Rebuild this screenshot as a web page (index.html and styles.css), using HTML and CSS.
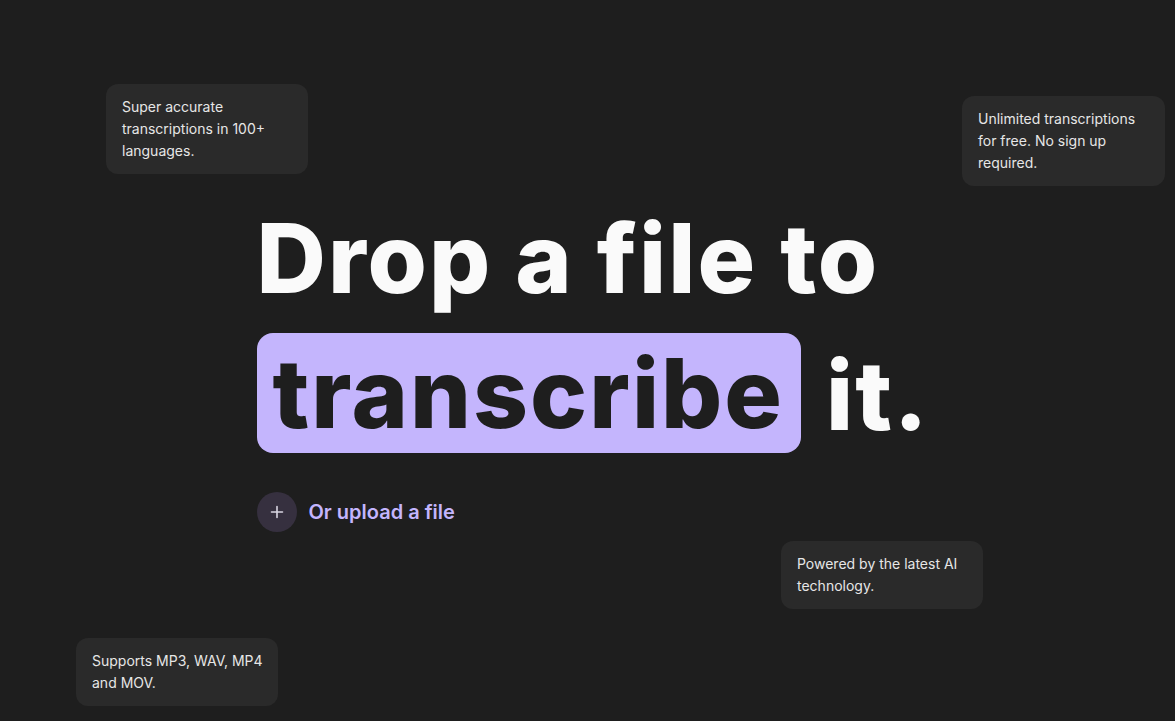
FILE: index.html
```html
<!DOCTYPE html>
<html lang="en">
<head>
<meta charset="utf-8">
<title>Drop a file to transcribe it</title>
<link rel="stylesheet" href="styles.css">
</head>
<body>
<main class="stage">
  <div class="note note-a">Super accurate transcriptions in 100+ languages.</div>
  <div class="note note-b">Unlimited transcriptions for free. No sign up required.</div>
  <div class="note note-c">Powered by the latest AI technology.</div>
  <div class="note note-d">Supports MP3, WAV, MP4 and MOV.</div>

  <section class="hero">
    <h1 class="title">Drop a file to<br><span class="mark">transcribe</span> it.</h1>
    <button class="upload" type="button">
      <span class="upload-icon">
        <svg width="16" height="16" viewBox="0 0 16 16" fill="none" stroke="currentColor" stroke-width="1.6" stroke-linecap="round"><path d="M8 2.5v11M2.5 8h11"/></svg>
      </span>
      <span class="upload-label">Or upload a file</span>
    </button>
  </section>
</main>
</body>
</html>
```

FILE: styles.css
```css
* { box-sizing: border-box; }
html, body { margin: 0; padding: 0; }
body {
  background: #1e1e1e;
  font-family: Inter, "Noto Sans", sans-serif;
  color: #fafafa;
  width: 1175px;
  height: 721px;
  overflow: hidden;
}
.stage {
  position: relative;
  width: 1175px;
  height: 721px;
  display: flex;
  justify-content: center;
  padding-top: 190px;
}
.hero {
  width: 662px;
}
.title {
  margin: 0;
  font-size: 96px;
  font-weight: 800;
  line-height: 137px;
  letter-spacing: 2px;
  white-space: nowrap;
  color: #fafafa;
}
.mark {
  display: inline-block;
  background: #c4b5fd;
  color: #1e1e1e;
  border-radius: 16px;
  padding: 0 17px 0 16px;
  line-height: 120px;
  margin-right: 2px;
  vertical-align: 2px;
}
.upload {
  display: flex;
  align-items: center;
  gap: 12px;
  margin-top: 28px;
  background: none;
  border: 0;
  padding: 0;
  font-family: inherit;
  cursor: pointer;
}
.upload-icon {
  width: 40px;
  height: 40px;
  border-radius: 50%;
  background: #36303f;
  color: #d9d5e2;
  display: flex;
  align-items: center;
  justify-content: center;
}
.upload-label {
  color: #c4b5fd;
  font-size: 20px;
  font-weight: 600;
}
.note {
  position: absolute;
  width: 202px;
  background: #2a2a2a;
  color: #e6e6e6;
  border-radius: 12px;
  padding: 12px 12px 12px 16px;
  font-size: 14px;
  line-height: 22px;
}
.note-a { left: 106px; top: 84px; }
.note-b { left: 962px; top: 96px; width: 203px; }
.note-c { left: 781px; top: 541px; }
.note-d { left: 76px; top: 638px; }
```
